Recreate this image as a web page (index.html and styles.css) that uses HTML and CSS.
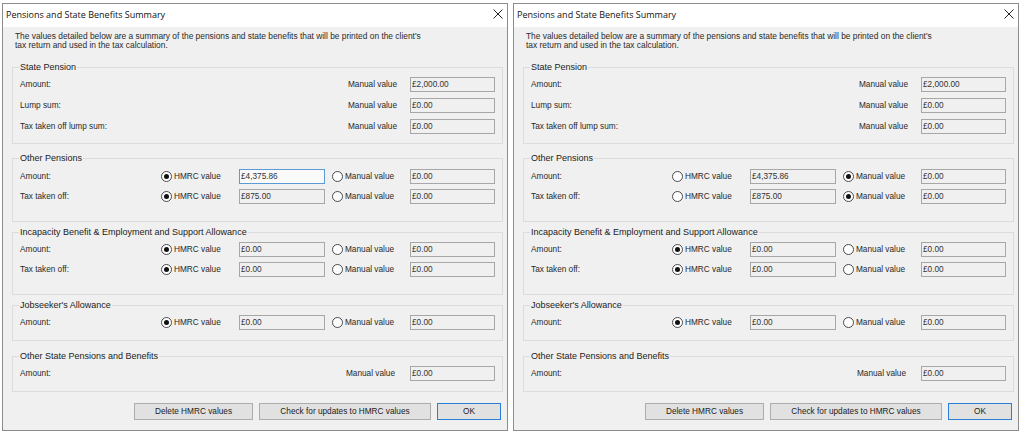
FILE: index.html
```
<!DOCTYPE html>
<html>
	<head>
		<meta charset="utf-8">
		<title>Pensions and State Benefits Summary</title>
		<link rel="stylesheet" href="styles.css">
	</head>
	<body>
		<div class="desk">
			<!-- 左边的窗口：HMRC 值 -->
			<div class="dialog">
				<div class="titlebar">
					<span class="title">Pensions and State Benefits Summary</span>
					<svg class="close" width="10" height="10" viewBox="0 0 10 10"><path d="M0.5 0.5L9.5 9.5M9.5 0.5L0.5 9.5" stroke="#222" stroke-width="1" fill="none"/></svg>
				</div>
				<div class="content">
					<p class="intro">The values detailed below are a summary of the pensions and state benefits that will be printed on the client's<br>tax return and used in the tax calculation.</p>

					<fieldset class="group group-state">
						<legend>State Pension</legend>
						<div class="row"><span class="lbl">Amount:</span><span class="mlbl">Manual value</span><span class="field">£2,000.00</span></div>
						<div class="row"><span class="lbl">Lump sum:</span><span class="mlbl">Manual value</span><span class="field">£0.00</span></div>
						<div class="row"><span class="lbl">Tax taken off lump sum:</span><span class="mlbl">Manual value</span><span class="field">£0.00</span></div>
					</fieldset>

					<fieldset class="group group-tall group-other">
						<legend>Other Pensions</legend>
						<div class="row"><span class="lbl">Amount:</span><span class="opt"><i class="radio on"></i>HMRC value</span><span class="field focus">£4,375.86</span><span class="opt"><i class="radio"></i>Manual value</span><span class="field">£0.00</span></div>
						<div class="row"><span class="lbl">Tax taken off:</span><span class="opt"><i class="radio on"></i>HMRC value</span><span class="field">£875.00</span><span class="opt"><i class="radio"></i>Manual value</span><span class="field">£0.00</span></div>
					</fieldset>

					<fieldset class="group group-tall group-near">
						<legend>Incapacity Benefit &amp; Employment and Support Allowance</legend>
						<div class="row"><span class="lbl">Amount:</span><span class="opt"><i class="radio on"></i>HMRC value</span><span class="field">£0.00</span><span class="opt"><i class="radio"></i>Manual value</span><span class="field">£0.00</span></div>
						<div class="row"><span class="lbl">Tax taken off:</span><span class="opt"><i class="radio on"></i>HMRC value</span><span class="field">£0.00</span><span class="opt"><i class="radio"></i>Manual value</span><span class="field">£0.00</span></div>
					</fieldset>

					<fieldset class="group group-near">
						<legend>Jobseeker's Allowance</legend>
						<div class="row"><span class="lbl">Amount:</span><span class="opt"><i class="radio on"></i>HMRC value</span><span class="field">£0.00</span><span class="opt"><i class="radio"></i>Manual value</span><span class="field">£0.00</span></div>
					</fieldset>

					<fieldset class="group group-last">
						<legend>Other State Pensions and Benefits</legend>
						<div class="row"><span class="lbl">Amount:</span><span class="mlbl mlbl-alt">Manual value</span><span class="field">£0.00</span></div>
					</fieldset>

					<div class="buttons">
						<button class="btn btn-del">Delete HMRC values</button>
						<button class="btn btn-check">Check for updates to HMRC values</button>
						<button class="btn btn-ok">OK</button>
					</div>
				</div>
			</div>

			<!-- 右边的窗口：手动值 -->
			<div class="dialog">
				<div class="titlebar">
					<span class="title">Pensions and State Benefits Summary</span>
					<svg class="close" width="10" height="10" viewBox="0 0 10 10"><path d="M0.5 0.5L9.5 9.5M9.5 0.5L0.5 9.5" stroke="#222" stroke-width="1" fill="none"/></svg>
				</div>
				<div class="content">
					<p class="intro">The values detailed below are a summary of the pensions and state benefits that will be printed on the client's<br>tax return and used in the tax calculation.</p>

					<fieldset class="group group-state">
						<legend>State Pension</legend>
						<div class="row"><span class="lbl">Amount:</span><span class="mlbl">Manual value</span><span class="field">£2,000.00</span></div>
						<div class="row"><span class="lbl">Lump sum:</span><span class="mlbl">Manual value</span><span class="field">£0.00</span></div>
						<div class="row"><span class="lbl">Tax taken off lump sum:</span><span class="mlbl">Manual value</span><span class="field">£0.00</span></div>
					</fieldset>

					<fieldset class="group group-tall group-other">
						<legend>Other Pensions</legend>
						<div class="row"><span class="lbl">Amount:</span><span class="opt"><i class="radio"></i>HMRC value</span><span class="field">£4,375.86</span><span class="opt"><i class="radio on"></i>Manual value</span><span class="field">£0.00</span></div>
						<div class="row"><span class="lbl">Tax taken off:</span><span class="opt"><i class="radio"></i>HMRC value</span><span class="field">£875.00</span><span class="opt"><i class="radio on"></i>Manual value</span><span class="field">£0.00</span></div>
					</fieldset>

					<fieldset class="group group-tall group-near">
						<legend>Incapacity Benefit &amp; Employment and Support Allowance</legend>
						<div class="row"><span class="lbl">Amount:</span><span class="opt"><i class="radio on"></i>HMRC value</span><span class="field">£0.00</span><span class="opt"><i class="radio"></i>Manual value</span><span class="field">£0.00</span></div>
						<div class="row"><span class="lbl">Tax taken off:</span><span class="opt"><i class="radio on"></i>HMRC value</span><span class="field">£0.00</span><span class="opt"><i class="radio"></i>Manual value</span><span class="field">£0.00</span></div>
					</fieldset>

					<fieldset class="group group-near">
						<legend>Jobseeker's Allowance</legend>
						<div class="row"><span class="lbl">Amount:</span><span class="opt"><i class="radio on"></i>HMRC value</span><span class="field">£0.00</span><span class="opt"><i class="radio"></i>Manual value</span><span class="field">£0.00</span></div>
					</fieldset>

					<fieldset class="group group-last">
						<legend>Other State Pensions and Benefits</legend>
						<div class="row"><span class="lbl">Amount:</span><span class="mlbl mlbl-alt">Manual value</span><span class="field">£0.00</span></div>
					</fieldset>

					<div class="buttons">
						<button class="btn btn-del">Delete HMRC values</button>
						<button class="btn btn-check">Check for updates to HMRC values</button>
						<button class="btn btn-ok">OK</button>
					</div>
				</div>
			</div>
		</div>
	</body>
</html>
```
FILE: styles.css
```
* {
	padding: 0;
	margin: 0;
	box-sizing: border-box;
}
body {
	background-color: #FFFFFF;
	font-family: "Liberation Sans", Arial, sans-serif;
	font-size: 8.25px;
	color: #2a2a2a;
}
.desk {
	display: flex;
	gap: 5px;
	padding: 3px 0 0 2px;
}
/* 窗口 */
.dialog {
	width: 506px;
	height: 428px;
	border: 1px solid #8c8c8c;
	background-color: #F0F0F0;
	display: flex;
	flex-direction: column;
}
.titlebar {
	height: 23px;
	background-color: #FFFFFF;
	display: flex;
	align-items: center;
	justify-content: space-between;
	/* 标题稍微靠上 */
	padding: 0 3px 3px 3px;
}
.title {
	font-family: "Open Sans", "Noto Sans", sans-serif;
	font-size: 9px;
	color: #111;
}
.close {
	margin-right: 1px;
}
.content {
	padding: 5px 4px 0 9px;
}
.intro {
	font-size: 8.4px;
	line-height: 9px;
	padding-left: 3px;
	margin-bottom: 12px;
}
/* 分组框 */
.group {
	border: 1px solid #DCDCDC;
	padding: 5px 6px 10px 6px;
	margin-top: 9px;
	display: flex;
	flex-direction: column;
	gap: 5px;
}
.group legend {
	padding: 0 1px;
	font-size: 9px;
	line-height: 10px;
	color: #222;
}
.group-state {
	margin-top: 0;
	gap: 6px;
	padding-bottom: 9px;
}
.group-tall {
	padding-bottom: 17px;
}
.group-other {
	padding-top: 6px;
}
.group-near {
	margin-top: 5px;
}
.group-last {
	margin-top: 10px;
}
.row {
	display: grid;
	grid-template-columns: 135px 71px 86px 71px 85px;
	column-gap: 7px;
	height: 15px;
	align-items: center;
}
.lbl {
	padding-left: 1px;
}
.mlbl {
	grid-column: 4;
	text-align: right;
	padding-right: 6px;
}
.mlbl-alt {
	padding-right: 8px;
}
.opt {
	display: flex;
	align-items: center;
	gap: 2px;
}
/* 单选按钮 */
.radio {
	width: 11px;
	height: 11px;
	border-radius: 50%;
	border: 1px solid #4a4a4a;
	background-color: #FFFFFF;
	position: relative;
}
.radio.on::after {
	content: "";
	position: absolute;
	left: 2px;
	top: 2px;
	width: 5px;
	height: 5px;
	border-radius: 50%;
	background-color: #111;
}
/* 文本框 */
.field {
	height: 15px;
	border: 1px solid #A7A7A7;
	background-color: #F0F0F0;
	padding-left: 1px;
	line-height: 13px;
	color: #333;
}
.field.focus {
	border-color: #5B9BD5;
	background-color: #FAFAFA;
}
/* 按钮 */
.buttons {
	display: flex;
	justify-content: flex-end;
	gap: 6px;
	margin-top: 11px;
	padding-right: 2px;
}
.btn {
	height: 17px;
	font-family: inherit;
	font-size: 8.25px;
	color: #222;
	background-color: #E1E1E1;
	border: 1px solid #ADADAD;
}
.btn-del {
	width: 119px;
}
.btn-check {
	width: 172px;
}
.btn-ok {
	width: 64px;
	border-color: #2A7FD4;
}
```
